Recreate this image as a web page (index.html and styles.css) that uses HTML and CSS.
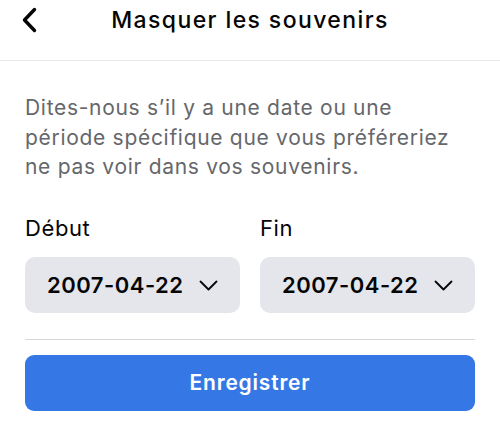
FILE: index.html
```html
<!DOCTYPE html>
<html lang="fr">
<head>
<meta charset="utf-8">
<link rel="stylesheet" href="styles.css">
</head>
<body>
<div class="page">
  <header class="header">
    <button class="back" aria-label="Retour">
      <svg width="16" height="26" viewBox="0 0 16 26"><path d="M13.5 2.5 L3.5 13 L13.5 23.5" fill="none" stroke="#050505" stroke-width="3.4" stroke-linecap="round" stroke-linejoin="round"/></svg>
    </button>
    <h1 class="title">Masquer les souvenirs</h1>
  </header>
  <main class="content">
    <p class="desc">Dites-nous s’il y a une date ou une période spécifique que vous préféreriez ne pas voir dans vos souvenirs.</p>
    <div class="fields">
      <div class="field">
        <div class="label">Début</div>
        <div class="select"><span class="value">2007-04-22</span>
          <svg class="chev" width="19" height="11" viewBox="0 0 19 11"><path d="M1.5 1.5 L9.5 9.5 L17.5 1.5" fill="none" stroke="#050505" stroke-width="1.8" stroke-linecap="round" stroke-linejoin="round"/></svg>
        </div>
      </div>
      <div class="field">
        <div class="label">Fin</div>
        <div class="select"><span class="value">2007-04-22</span>
          <svg class="chev" width="19" height="11" viewBox="0 0 19 11"><path d="M1.5 1.5 L9.5 9.5 L17.5 1.5" fill="none" stroke="#050505" stroke-width="1.8" stroke-linecap="round" stroke-linejoin="round"/></svg>
        </div>
      </div>
    </div>
    <hr class="divider">
    <button class="save">Enregistrer</button>
  </main>
</div>
</body>
</html>
```
FILE: styles.css
```css
* { box-sizing: border-box; }
html, body { margin: 0; padding: 0; background: #fff; }
body { font-family: Inter, "Noto Sans", "Liberation Sans", sans-serif; color: #050505; }
.page { width: 500px; }
.header {
  height: 61px;
  border-bottom: 1px solid #e8e8e8;
  display: flex;
  align-items: flex-start;
  justify-content: center;
  position: relative;
}
.back {
  position: absolute;
  left: 21px;
  top: 7px;
  background: none;
  border: 0;
  padding: 0;
  width: 16px;
  height: 26px;
  display: flex;
}
.title {
  margin: 6px 0 0;
  font-size: 23px;
  line-height: 28px;
  font-weight: 500;
  letter-spacing: 1.4px;
}
.content { padding: 0 25px; }
.desc {
  margin: 32px 0 0;
  font-size: 21px;
  line-height: 29.5px;
  color: #65676b;
  letter-spacing: 0.7px;
}
.fields {
  display: flex;
  gap: 20px;
  margin-top: 32px;
}
.field { width: 215px; }
.label {
  font-size: 22px;
  line-height: 28px;
  color: #050505;
  margin-bottom: 15px;
  letter-spacing: 0.6px;
}
.select {
  height: 56px;
  border-radius: 10px;
  background: #e4e6eb;
  display: flex;
  align-items: center;
  padding-left: 22px;
  gap: 16px;
}
.value { font-size: 22px; font-weight: 600; letter-spacing: 0.5px; }
.chev { margin-top: 2px; }
.divider {
  margin: 26px 0 0;
  border: 0;
  border-top: 1px solid #d8d8d8;
}
.save {
  display: block;
  margin-top: 15px;
  width: 450px;
  height: 56px;
  border: 0;
  border-radius: 9px;
  background: #3578e5;
  color: #fff;
  font-family: inherit;
  font-size: 21px;
  font-weight: 600;
  letter-spacing: 0.8px;
}
```
